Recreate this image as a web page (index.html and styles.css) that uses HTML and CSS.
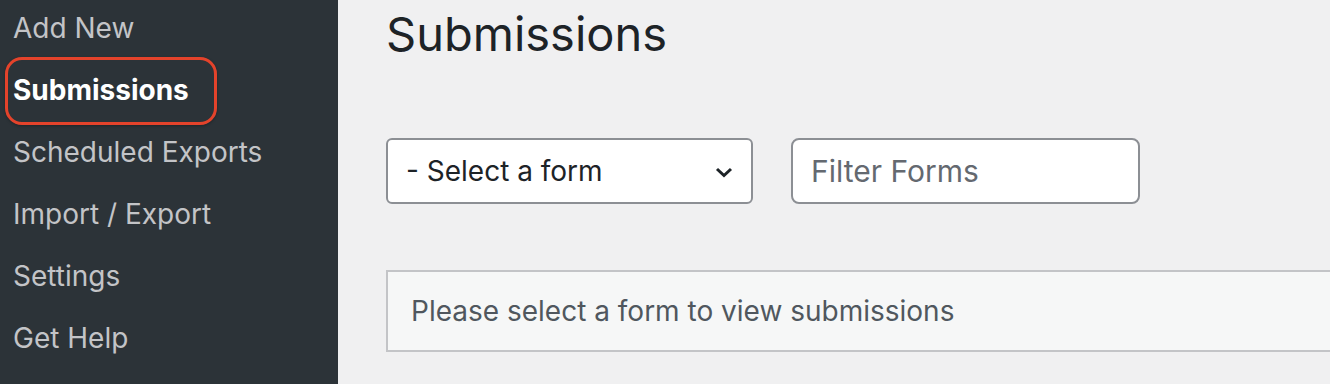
FILE: index.html
```html
<!DOCTYPE html>
<html>
<head>
<meta charset="utf-8">
<link rel="stylesheet" href="styles.css">
</head>
<body>
<div class="page">
  <nav class="sidebar">
    <ul class="menu">
      <li class="item">Add New</li>
      <li class="item current"><span class="label">Submissions</span><span class="mark"></span></li>
      <li class="item">Scheduled Exports</li>
      <li class="item">Import / Export</li>
      <li class="item">Settings</li>
      <li class="item">Get Help</li>
    </ul>
  </nav>
  <main class="main">
    <h1 class="title">Submissions</h1>
    <div class="filters">
      <div class="select">
        <span class="select-text">- Select a form</span>
        <svg class="chev" width="18" height="11" viewBox="0 0 18 11"><path d="M2 2 L9 8.5 L16 2" fill="none" stroke="#1d2327" stroke-width="3"/></svg>
      </div>
      <div class="input"><span class="placeholder">Filter Forms</span></div>
    </div>
    <div class="notice">Please select a form to view submissions</div>
  </main>
</div>
</body>
</html>
```
FILE: styles.css
```css
html, body { margin: 0; padding: 0; }
body {
  width: 1330px; height: 384px; overflow: hidden;
  background: #f0f0f1;
  font-family: Inter, "Noto Sans", sans-serif;
}
.page { display: flex; height: 384px; }
.sidebar { width: 338px; flex: none; background: #2c3338; }
.menu { list-style: none; margin: -3px 0 0; padding: 0; }
.item {
  position: relative;
  height: 62px; line-height: 62px;
  padding-left: 13px;
  font-size: 28px;
  color: #c3c4c7;
}
.item.current { color: #fff; font-weight: 700; }
.mark {
  position: absolute; left: 5px; top: -2px;
  width: 206px; height: 62px;
  border: 3px solid #e4432b;
  border-radius: 17px;
  box-shadow: 0 1px 3px rgba(0,0,0,0.3);
}
.main { flex: 1; padding-left: 48px; min-width: 0; }
.title {
  margin: 0; padding-top: 3px;
  font-size: 47px; font-weight: 400; line-height: 62px;
  color: #1d2327;
}
.filters { display: flex; gap: 38px; margin-top: 73px; }
.select {
  box-sizing: border-box;
  width: 367px; height: 66px;
  border: 2px solid #8c8f94; border-radius: 6px;
  background: #fff;
  display: flex; align-items: center; justify-content: space-between;
  padding: 0 18px 0 18px;
}
.select-text { font-size: 28px; color: #1d2327; }
.chev { margin-top: 2px; }
.input {
  box-sizing: border-box;
  width: 349px; height: 66px;
  border: 2px solid #8c8f94; border-radius: 8px;
  background: #fff;
  display: flex; align-items: center;
  padding-left: 18px;
}
.placeholder { font-size: 30px; color: #646970; }
.notice {
  margin-top: 66px;
  box-sizing: border-box;
  width: 1000px; height: 82px;
  border: 2px solid #c3c4c7; border-right: none;
  background: #f6f7f7;
  padding-left: 23px;
  display: flex; align-items: center;
  font-size: 28px; color: #50575e;
}
```
